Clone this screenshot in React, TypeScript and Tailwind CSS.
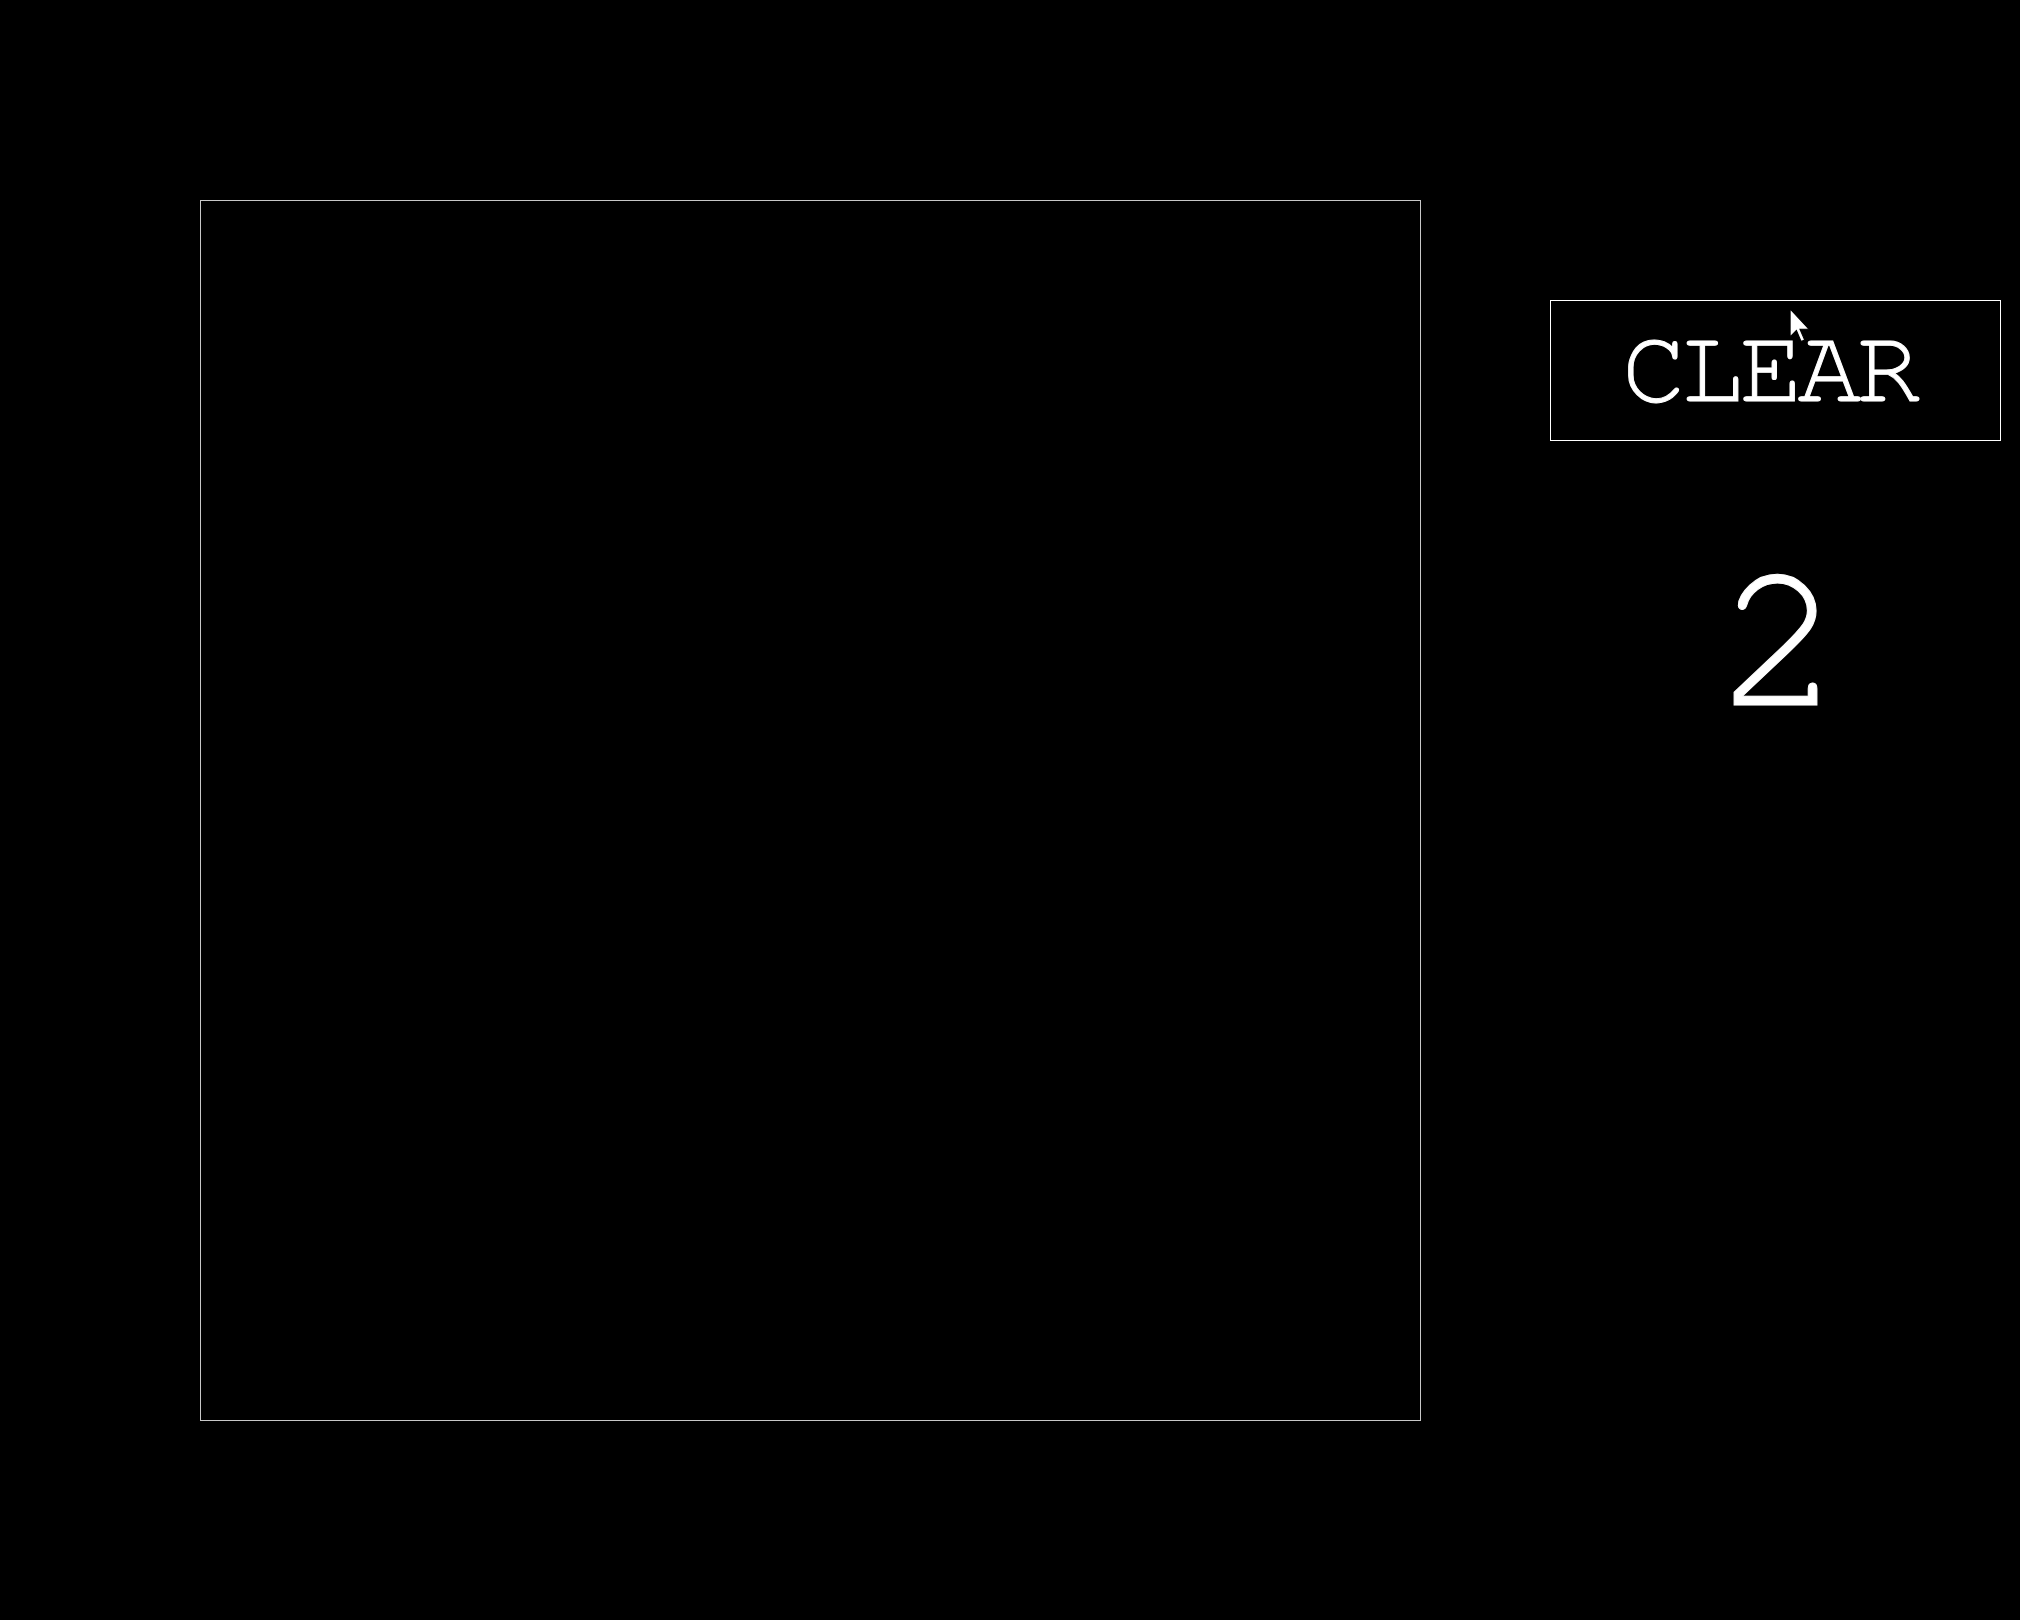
import React from "react";

export default function App() {
  return (
    <div className="w-[2020px] h-[1620px] bg-black flex items-start pl-[200px] pt-[200px] font-['FreeMono','Courier_New',monospace]">
      <div className="w-[1221px] h-[1221px] border border-[#c8c8c8] bg-black shrink-0" />
      <div className="ml-[129px] w-[451px] flex flex-col items-center pt-[100px]">
        <button className="relative w-[451px] h-[141px] border border-white bg-black text-white text-[106px] leading-none tracking-[-5px] flex items-center justify-center pb-[4px] pr-[14px] [-webkit-text-stroke:1px_white] font-['FreeMono','Courier_New',monospace]">
          CLEAR
          <svg
            className="absolute left-[237px] top-[7px]"
            width="24"
            height="36"
            viewBox="0 0 12 20"
          >
            <path d="M0.5 0.5 L0.5 16 L4 12.5 L6.6 18.6 L8.6 17.8 L6 11.8 L11 11.8 Z" fill="white" stroke="black" strokeWidth="0.6" />
          </svg>
        </button>
        <div className="mt-[96px] pl-[8px] text-white text-[210px] leading-none [-webkit-text-stroke:1px_white] font-['FreeMono','Courier_New',monospace]">
          2
        </div>
      </div>
    </div>
  );
}
